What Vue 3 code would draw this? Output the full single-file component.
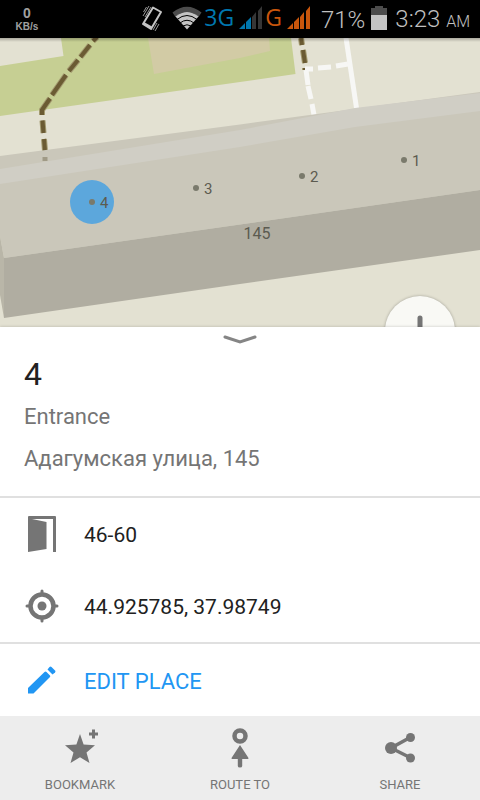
<template>
  <div class="app">
    <header class="status-bar">
      <div class="net-speed">
        <span class="net-value">0</span>
        <span class="net-unit">KB/s</span>
      </div>
      <div class="status-icons">
        <svg class="icon-vibrate" width="24" height="28" viewBox="0 0 24 28">
          <path d="M13 3.500 L21 8 L11 25 L3 20 Z" fill="none" stroke="#c4c4c4" stroke-width="2" stroke-linejoin="round" />
          <path d="M4 18 L12 22.500 L11 25 L3 20.500 Z" fill="#c4c4c4" />
          <path d="M3 12 L9 2 M5 13 L11 3 M3.500 8 L6.500 3 M13 26 L17 19 M15 27 L19 20" fill="none" stroke="#9a9a9a" stroke-width="1" />
        </svg>
        <svg class="icon-wifi" width="30" height="24" viewBox="0 0 30 24">
          <path d="M0.500 6.500 Q15 -5 29.500 6.500 L26.500 11 Q15 1 3.500 11 Z" fill="#4c4c4c" />
          <path d="M3.500 10.500 Q15 1.500 26.500 10.500 L15 23.500 Z" fill="#c4c4c4" />
          <path d="M5 13.500 Q15 5.500 25 13.500 M8 17 Q15 11.500 22 17 M11 20 Q15 17.500 19 20" fill="none" stroke="#000" stroke-width="1" />
        </svg>
        <span class="net-type blue">3G</span>
        <svg class="icon-signal" width="24" height="24" viewBox="0 0 24 24">
          <path d="M0 23 L6 17 V23 Z M7 16 L12 11 V23 H7 Z" fill="#0077ae" />
          <path d="M13 11 L17 6 V23 H13 Z M19 5 L23 0 V23 H19 Z" fill="#363636" />
        </svg>
        <span class="net-type orange">G</span>
        <svg class="icon-signal last" width="24" height="24" viewBox="0 0 24 24">
          <path d="M0 23 L6 17 V23 Z M7 16 L12 11 V23 H7 Z M13 11 L17 6 V23 H13 Z M19 5 L23 0 V23 H19 Z" fill="#c9560c" />
        </svg>
        <span class="battery-level">71%</span>
        <svg class="icon-battery" width="16" height="24" viewBox="0 0 16 24">
          <path d="M0 2 H4 V0 H12 V2 H16 V9 H0 Z" fill="#4c4c4c" />
          <path d="M0 9 H16 V24 H0 Z" fill="#c4c4c4" />
        </svg>
        <span class="clock">3:23 <small>AM</small></span>
      </div>
    </header>

    <main class="map">
      <svg class="map-canvas" viewBox="0 38 480 289" preserveAspectRatio="xMidYMid slice">
        <defs>
          <linearGradient id="top-shade" x1="0" y1="0" x2="0" y2="1">
            <stop offset="0" stop-color="#000" stop-opacity="0.25" />
            <stop offset="1" stop-color="#000" stop-opacity="0" />
          </linearGradient>
        </defs>
        <rect x="0" y="38" width="480" height="289" fill="#e3e1d2" />
        <!-- park -->
        <path d="M61 38 L63.500 56 L0 66 V116 L240 82 L295.500 74 L291 38 Z" fill="#c6cf93" />
        <path d="M148 38 L154 74 L240 58 L270 51 L269 38 Z" fill="#d2cba5" />
        <!-- footpaths -->
        <path :d="brownPath" fill="none" stroke="#a39a70" stroke-width="6" />
        <path :d="brownPath" fill="none" stroke="#6b5b33" stroke-width="4" />
        <path d="M346 38 L356.500 108" fill="none" stroke="#f7f7f5" stroke-width="5" />
        <path d="M305 69 L313 69 M318 68 L331 67 M336 66 L348 64 M306 70 L308 85 M308 86 L311 99 M312 104 L314 115" fill="none" stroke="#f7f7f5" stroke-width="5" />
        <!-- building -->
        <path d="M0 156 L240 124.500 L480 92 V190 L240 224.500 L4 258 L0 236 Z" fill="#cac7ba" />
        <path d="M0 169 L240 130 L355 108 L480 93 V111 L355 127 L240 147 L0 184 Z" fill="#d0cec5" />
        <path d="M0 236 L4 258 V318 L0 295 Z" fill="#b9b6a8" />
        <path d="M4 258 L240 224.500 L480 190 V250 L240 284 L4 318 Z" fill="#b0ada1" />
        <path d="M45 157 V161" fill="none" stroke="#a09a86" stroke-width="5" />
        <rect x="0" y="38" width="480" height="4" fill="url(#top-shade)" />
        <!-- entrances -->
        <circle cx="92" cy="202" r="22" fill="#5ca7dc" />
        <g v-for="e in entrances" :key="e.name">
          <circle :cx="e.x" :cy="e.y" r="3" fill="#7a7a6c" />
          <text class="map-label" :x="e.x + 8" :y="e.y + 6">{{ e.name }}</text>
        </g>
        <text class="map-label house" x="257" y="239">145</text>
      </svg>
      <button class="zoom-in" aria-label="Zoom in">
        <svg width="32" height="32" viewBox="0 0 32 32">
          <path d="M16 3 V29 M3 16 H29" fill="none" stroke="#757575" stroke-width="5" stroke-linecap="round" />
        </svg>
      </button>
    </main>

    <section class="sheet">
      <div class="place">
        <button class="collapse" aria-label="Collapse">
          <svg width="36" height="10" viewBox="0 0 36 10">
            <path d="M3 2 L18 7 L33 2" fill="none" stroke="#858585" stroke-width="3" stroke-linecap="round" />
          </svg>
        </button>
        <h1>4</h1>
        <p>Entrance</p>
        <p>Адагумская улица, 145</p>
      </div>

      <div class="details">
        <div class="row">
          <svg class="row-icon" width="36" height="36" viewBox="0 0 36 36">
            <path d="M4 36 V1 Q4 0 5 0 H31 Q32 0 32 1 V36 H29 V3 H8 L22.500 6 V33 Z" fill="#757575" />
          </svg>
          <span>46-60</span>
        </div>
        <div class="row">
          <svg class="row-icon" width="36" height="36" viewBox="0 0 36 36">
            <circle cx="18" cy="18" r="11.500" fill="none" stroke="#757575" stroke-width="4.500" />
            <circle cx="18" cy="18" r="4.500" fill="#757575" />
            <path d="M18 3 V6 M18 30 V33 M3 18 H6 M30 18 H33" stroke="#757575" stroke-width="3" stroke-linecap="round" />
          </svg>
          <span>44.925785, 37.98749</span>
        </div>
      </div>

      <button class="row edit">
        <svg class="row-icon" width="36" height="36" viewBox="0 0 36 36">
          <path d="M4 31.500 V26 L20.500 10 Q21.500 9 22.500 10 L26 13.500 Q26.500 14.500 26 15 L9.500 31.500 Z" fill="#2196f3" />
          <path d="M23.500 7.500 L25.500 5 Q26.500 4 27.500 5 L31 8.500 Q32 9.500 31 10.500 L28.500 12.500 Z" fill="#2196f3" />
        </svg>
        <span>EDIT PLACE</span>
      </button>
    </section>

    <nav class="actions">
      <button>
        <svg width="48" height="48" viewBox="0 0 48 48">
          <path d="M24 10 L27.600 20.400 L39 21.300 L30.500 28.500 L33.500 39 L24 33.300 L14.500 39 L17.500 28.500 L9 21.300 L20.400 20.400 Z" fill="#757575" />
          <path d="M37.500 7 V13 M34.500 10 H40.500" stroke="#757575" stroke-width="3" stroke-linecap="square" />
        </svg>
        <span>BOOKMARK</span>
      </button>
      <button>
        <svg width="48" height="48" viewBox="0 0 48 48">
          <circle cx="24" cy="12" r="5.500" fill="none" stroke="#757575" stroke-width="4.500" />
          <path d="M24 21 L32.500 34 Q32.500 35 32 35 H26.200 V42 Q26.200 43.500 24 43.500 Q21.800 43.500 21.800 42 V35 H16 Q15.500 35 15.500 34 Z" fill="#757575" />
        </svg>
        <span>ROUTE TO</span>
      </button>
      <button>
        <svg width="48" height="48" viewBox="0 0 48 48">
          <path d="M35 13 L15 24 L35 34" fill="none" stroke="#757575" stroke-width="3.500" />
          <circle cx="15" cy="24" r="6" fill="#757575" />
          <circle cx="34.500" cy="13.500" r="4.500" fill="#757575" />
          <circle cx="34.500" cy="34" r="4.500" fill="#757575" />
        </svg>
        <span>SHARE</span>
      </button>
    </nav>
  </div>
</template>

<script setup>
import { ref } from 'vue';

const entrances = ref([
  { name: '1', x: 404, y: 160 },
  { name: '2', x: 302, y: 176 },
  { name: '3', x: 196, y: 188 },
  { name: '4', x: 92, y: 202 },
]);

// dashed footpath, one segment per dash
const brownPath = [
  'M97 37 L93 41 M90 45 L80.500 57 M78 60 L69 71 M66 75 L52 95',
  'M50 98.500 L42 110 V115 M42.500 120.500 L43.500 133 M44 139 L45 151',
  'M301 38 L302 45 M303 50 L305 63 M305 68 V70',
].join(' ');
</script>

<style>
body {
  margin: 0;
}
</style>

<style scoped>
.app {
  display: flex;
  flex-direction: column;
  min-height: 100vh;
  font-family: Roboto, 'Liberation Sans', sans-serif;
  background: #fff;
}

button {
  border: 0;
  padding: 0;
  margin: 0;
  background: none;
  font-family: inherit;
  cursor: pointer;
}

.status-bar {
  display: flex;
  justify-content: space-between;
  align-items: center;
  height: 38px;
  padding: 0 10px 0 12px;
  background: #000;
  color: #c0c0c0;
}

.net-speed {
  display: flex;
  flex-direction: column;
  align-items: center;
  width: 30px;
  color: #a0a0a0;
  font-family: 'Liberation Sans', sans-serif;
  font-weight: 700;
}

.net-value {
  font-size: 14px;
  line-height: 16px;
}

.net-unit {
  font-size: 10px;
  line-height: 12px;
}

.status-icons {
  display: flex;
  align-items: center;
  padding-bottom: 2px;
  line-height: 32px;
  white-space: nowrap;
}

.icon-vibrate {
  margin-right: 8px;
}

.icon-wifi {
  margin-right: 2px;
}

.net-type {
  padding-bottom: 2px;
  font-family: 'Open Sans', 'Noto Sans', sans-serif;
  font-size: 23px;
}

.blue {
  color: #0077ae;
}

.orange {
  color: #c9560c;
}

.icon-signal {
  margin: 0 2px 0 5px;
}

.icon-signal.last {
  margin-right: 10px;
}

.battery-level,
.clock {
  padding-top: 4px;
  font-size: 24px;
  font-weight: 300;
}

.icon-battery {
  margin: 0 8px 0 6px;
}

.clock small {
  font-size: 16px;
}

.map {
  position: relative;
  display: flex;
  flex: 1;
  min-height: 200px;
  overflow: hidden;
  background: #e3e1d2;
}

.map-canvas {
  flex: 1;
  width: 100%;
  height: 289px;
  min-height: 100%;
}

.map-label {
  font-size: 15px;
  fill: #5c5b50;
}

.map-label.house {
  font-size: 16px;
  text-anchor: middle;
}

.zoom-in {
  position: absolute;
  right: 25px;
  bottom: -39px;
  display: flex;
  align-items: center;
  justify-content: center;
  width: 70px;
  height: 70px;
  border-radius: 50%;
  background: #f9f9f5;
  box-shadow: 0 0 3px rgba(0, 0, 0, 0.3);
}

.sheet {
  position: relative;
  background: #fff;
  color: #212121;
  box-shadow: 0 0 3px rgba(0, 0, 0, 0.2);
}

.place {
  display: flex;
  flex-direction: column;
  padding: 8px 24px 16px;
}

.collapse {
  display: flex;
  align-self: center;
}

.place h1 {
  margin: 7px 0 0;
  font-size: 32px;
  font-weight: 400;
  line-height: 44px;
}

.place p {
  margin: 0;
  padding: 1px 0;
  font-size: 22px;
  line-height: 40px;
  color: #757575;
}

.details {
  border-top: 2px solid #e0e0e0;
  border-bottom: 2px solid #e0e0e0;
}

.row {
  display: flex;
  align-items: center;
  gap: 24px;
  width: 100%;
  height: 72px;
  padding: 0 24px;
  box-sizing: border-box;
  font-size: 21px;
  text-align: left;
}

.row span {
  padding-top: 2px;
}

.edit {
  font-size: 22px;
  color: #2196f3;
}

.actions {
  position: relative;
  display: grid;
  grid-template-columns: repeat(3, 1fr);
  background: #ededed;
}

.actions button {
  display: flex;
  flex-direction: column;
  align-items: center;
  gap: 4px;
  padding: 8px 0 6px;
  font-size: 13px;
  line-height: 18px;
  color: #757575;
}
</style>
